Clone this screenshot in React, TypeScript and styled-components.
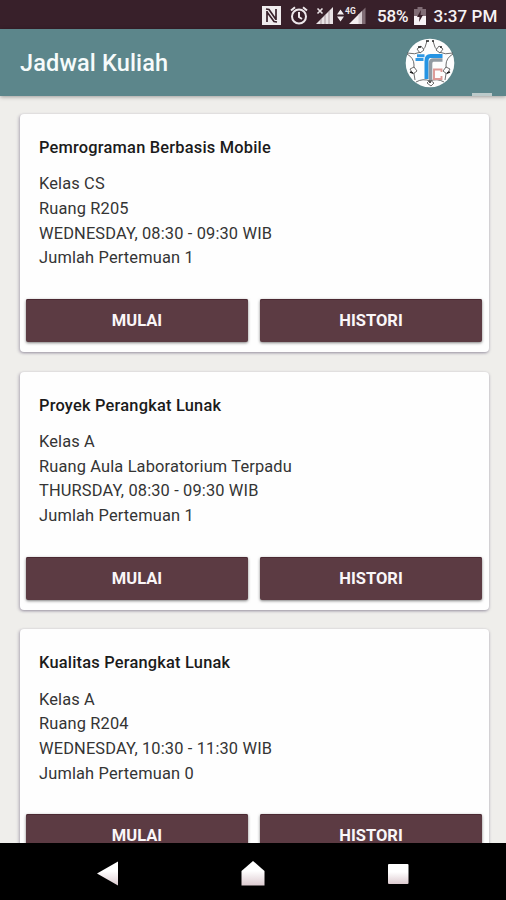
import React from "react";
import styled, { createGlobalStyle } from "styled-components";

const GlobalStyle = createGlobalStyle`
  * { box-sizing: border-box; }
  body { margin: 0; background: #efeeeb; font-family: Roboto, "Liberation Sans", sans-serif; }
  button { font-family: inherit; }
`;

const Screen = styled.div`
  width: 506px;
  height: 900px;
  display: flex;
  flex-direction: column;
  overflow: hidden;
  background: #efeeeb;
`;

const StatusBar = styled.div`
  flex: none;
  height: 29px;
  padding: 2px 9px 0 262px;
  display: flex;
  align-items: center;
  background: #38202a;
  color: #f7f3f5;
  font-size: 17px;
  font-weight: 500;
  white-space: nowrap;
`;

const StatusIcon = styled.svg<{ $gap: number }>`
  flex: none;
  display: block;
  margin-right: ${(p) => p.$gap}px;
`;

const Percent = styled.span`
  width: 32px;
  margin-right: 5px;
  letter-spacing: -0.1px;
`;

const Clock = styled.span`
  letter-spacing: 0.05px;
`;

const AppBar = styled.header`
  flex: none;
  z-index: 1;
  height: 67px;
  padding: 0 14px 0 20px;
  display: flex;
  align-items: center;
  background: #5c868b;
  box-shadow: 0 1px 4px rgba(0, 0, 0, 0.35);
`;

const Title = styled.h1`
  flex: 1;
  margin: 0;
  color: #f6fbfb;
  font-size: 23.5px;
  font-weight: 500;
  line-height: 30px;
  letter-spacing: 0.15px;
`;

const Logo = styled.svg`
  display: block;
  flex: none;
  margin-top: 1px;
`;

const OverflowHint = styled.div`
  align-self: flex-end;
  width: 20px;
  height: 3px;
  margin-left: 17px;
  background: #bccaca;
`;

const List = styled.main`
  flex: 1;
  min-height: 0;
  overflow: hidden;
  padding: 18px 17px 0 20px;
  display: flex;
  flex-direction: column;
  gap: 19.7px;
`;

const Card = styled.article`
  flex: none;
  height: 238px;
  padding: 21px 7px 10px 6px;
  display: flex;
  flex-direction: column;
  background: #fefefe;
  border-radius: 4px;
  box-shadow: 0 1px 3px rgba(55, 45, 80, 0.4), -2px 1px 3px rgba(55, 45, 80, 0.12);
`;

const Course = styled.h2`
  margin: 0 13px 11.4px;
  color: #1b1b1b;
  font-size: 16.4px;
  font-weight: 500;
  line-height: 26px;
  letter-spacing: 0.21px;
`;

const Details = styled.div`
  margin: 0 13px;
  color: #343434;
  font-size: 16.4px;
  line-height: 24.6px;
  letter-spacing: 0.15px;
`;

const Actions = styled.div`
  margin-top: auto;
  display: grid;
  grid-template-columns: 1fr 1fr;
  gap: 12px;
`;

const Action = styled.button`
  height: 43px;
  padding: 0;
  border: 0;
  border-radius: 2px;
  background: #5c3b43;
  color: #faf6f8;
  font-size: 16.5px;
  font-weight: 700;
  box-shadow: 0 1px 3px rgba(0, 0, 0, 0.5), inset 0 1px 0 #4b2932;
`;

const NavBar = styled.nav`
  flex: none;
  height: 57px;
  padding: 4px 36px 0 35px;
  display: grid;
  grid-template-columns: repeat(3, 1fr);
  align-items: center;
  justify-items: center;
  background: #000;
`;

const courses = [
  { name: "Pemrograman Berbasis Mobile", lines: ["Kelas CS", "Ruang R205", "WEDNESDAY, 08:30 - 09:30 WIB", "Jumlah Pertemuan 1"] },
  { name: "Proyek Perangkat Lunak", lines: ["Kelas A", "Ruang Aula Laboratorium Terpadu", "THURSDAY, 08:30 - 09:30 WIB", "Jumlah Pertemuan 1"] },
  { name: "Kualitas Perangkat Lunak", lines: ["Kelas A", "Ruang R204", "WEDNESDAY, 10:30 - 11:30 WIB", "Jumlah Pertemuan 0"] },
];

const NfcIcon = () => (
  <StatusIcon $gap={9} width="19" height="19" viewBox="0 0 19 19">
    <path d="M0 0h19v19H0z" fill="#f0ecee" />
    <path d="M5 16V5M14 14V3M4 3l3 .5 7 10M5 6l7 9.500 3 .5" fill="none" stroke="#38202a" strokeWidth="1.700" />
  </StatusIcon>
);

const AlarmIcon = () => (
  <StatusIcon $gap={8} width="18" height="19" viewBox="0 0 18 19" fill="none" stroke="#eee8eb" strokeWidth="2">
    <circle cx="9" cy="10.5" r="7" />
    <path d="M1 4.5L5 1.2M17 4.5l-4-3.3M9 6v5l3 2" />
  </StatusIcon>
);

const SignalIcons = () => (
  <StatusIcon $gap={11} width="50" height="19" viewBox="0 0 50 19">
    <path d="M0 18L17 1v17z" fill="#e9e2e5" />
    <path d="M5 13v5M9 9v9M13 5v13" stroke="#8b737d" strokeWidth=".7" />
    <path d="M1.500 2.500l5 5M6.500 2.500l-5 5" stroke="#e9e2e5" strokeWidth="1.600" />
    <path d="M21 8.500L24.500 3.500l3.500 5zM21 10.500L24.500 15.500l3.500-5z" fill="#f4eef1" />
    <path d="M33 18L43 8v10z" fill="#f4eef1" />
    <path d="M43 8l6.500-6.500V18H43z" fill="#806c75" />
    <path d="M42.500 8.500L46 5v13h-3.500z" fill="#d8ced2" />
    <text x="29" y="7.500" fill="#eee7ea" fontFamily="Roboto, sans-serif" fontSize="8.500" fontWeight="700">4G</text>
  </StatusIcon>
);

const BatteryIcon = () => (
  <StatusIcon $gap={8} width="12" height="18" viewBox="0 0 12 18">
    <path d="M3.500 0h5v2H12v7H0V2h3.500z" fill="#806c75" />
    <path d="M0 9h12v9H0z" fill="#f7f2f5" />
    <path d="M7 3L3 10h2.500L5 15l4-7H6.500z" fill="#38202a" />
  </StatusIcon>
);

const AppLogo = () => (
  <Logo width="50" height="50" viewBox="0 0 50 50">
    <circle cx="25" cy="25" r="24.300" fill="#fdfdfd" />
    <g fill="none" stroke="#4a4a4a" strokeWidth=".8">
      <path d="M2 15q8 2 14-1 5-4 6-11M28 3q1 7 6 11 6 3 14 1M2 16q7 4 7 11-1 7 1 15M48 16q-7 4-7 11 1 7-1 15M11 44q7-4 14-1 7-3 14 1" />
      <path d="M12 11l4-3 3 4-4 3zM38 11l-4-3-3 4 4 3zM5 31l4-2 3 4-4 3zM45 31l-4-2-3 4 4 3zM22 45l3-3 4 3-3 3z" fill="#fff" />
    </g>
    <path d="M13 9h3M35 9h2M5 34l3 1M42 35l3-1M21 3h3M27 3h2M24 44h2" stroke="#222" strokeWidth="1.600" />
    <path d="M12 17.700h7.500M10.500 21.500h8" fill="none" stroke="#3199e4" strokeWidth="3" />
    <path d="M37.500 18H25.500q-4 0-4 5V41" fill="none" stroke="#2594e3" strokeWidth="4" />
    <path d="M37.500 22H28.500q-3 0-3 3.500V42" fill="none" stroke="#929ba2" strokeWidth="3.600" />
    <path d="M36.500 34v-2.500h-7.500v9.500h7.500V38" fill="none" stroke="#dc9995" strokeWidth="1.900" />
  </Logo>
);

const NavIcons = () => (
  <NavBar>
    <svg width="22" height="25" viewBox="0 0 22 25" aria-label="Back">
      <defs>
        <linearGradient id="navShade" x1="0" y1="0" x2="0" y2="1">
          <stop offset=".4" stopColor="#fff" />
          <stop offset="1" stopColor="#ddcbd0" />
        </linearGradient>
      </defs>
      <path d="M0 12.500L21 .5v24z" fill="url(#navShade)" />
    </svg>
    <svg width="24" height="25" viewBox="0 0 24 25" aria-label="Home">
      <path d="M12 0l11.500 10v14.500H.5V10z" fill="url(#navShade)" />
    </svg>
    <svg width="22" height="22" viewBox="0 0 22 22" aria-label="Recents">
      <rect x="1" y="1" width="20.500" height="20" rx="1" fill="url(#navShade)" />
    </svg>
  </NavBar>
);

export default function App() {
  return (
    <>
      <GlobalStyle />
      <Screen>
        <StatusBar>
          <NfcIcon />
          <AlarmIcon />
          <SignalIcons />
          <Percent>58%</Percent>
          <BatteryIcon />
          <Clock>3:37 PM</Clock>
        </StatusBar>
        <AppBar>
          <Title>Jadwal Kuliah</Title>
          <AppLogo />
          <OverflowHint />
        </AppBar>
        <List>
          {courses.map((course) => (
            <Card key={course.name}>
              <Course>{course.name}</Course>
              <Details>
                {course.lines.map((line) => (
                  <div key={line}>{line}</div>
                ))}
              </Details>
              <Actions>
                <Action>MULAI</Action>
                <Action>HISTORI</Action>
              </Actions>
            </Card>
          ))}
        </List>
        <NavIcons />
      </Screen>
    </>
  );
}
